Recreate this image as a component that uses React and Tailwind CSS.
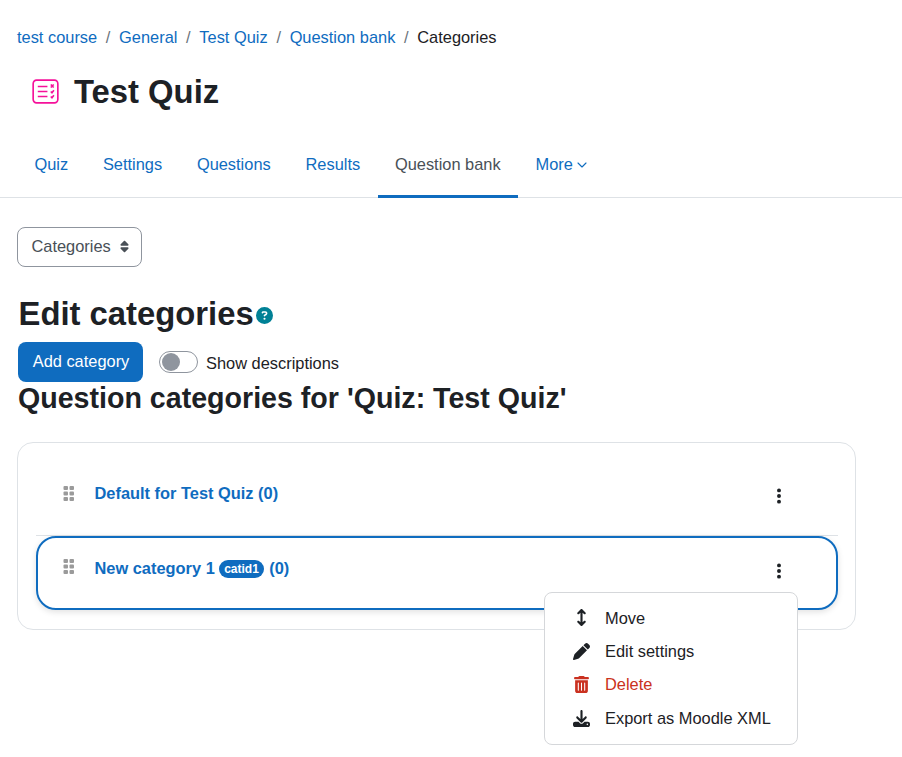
import { FaArrowsUpDown, FaCircleQuestion, FaDownload, FaEllipsisVertical, FaPen, FaSort, FaTrashCan } from "react-icons/fa6";
import { ChevronDown } from "lucide-react";

const crumbs = ["test course", "General", "Test Quiz", "Question bank"];
const tabs = ["Quiz", "Settings", "Questions", "Results"];

function QuizIcon() {
  return (
    <svg width="27" height="25" viewBox="0 0 28 25" fill="none" stroke="#f5119a" strokeWidth="1.7" className="mb-[2px]" preserveAspectRatio="none">
      <rect x="1.2" y="1.2" width="25.6" height="22.6" rx="3.5" />
      <path d="M6 7.5h10M6 12.5h10M6 17.5h10" />
      <path d="M19.5 5.5l3 3M22.5 5.5l-3 3M19.5 12.5l1.2 1.2 2-2.4M19.5 17.5l1.2 1.2 2-2.4" />
    </svg>
  );
}

function Grip() {
  return (
    <svg width="12" height="15" viewBox="0 0 12 15" fill="#9a9a9a" className="ml-px shrink-0">
      <rect x="0.5" y="0" width="4.5" height="4" rx="1" />
      <rect x="6.5" y="0" width="4.5" height="4" rx="1" />
      <rect x="0.5" y="5.5" width="4.5" height="4" rx="1" />
      <rect x="6.5" y="5.5" width="4.5" height="4" rx="1" />
      <rect x="0.5" y="11" width="4.5" height="4" rx="1" />
      <rect x="6.5" y="11" width="4.5" height="4" rx="1" />
    </svg>
  );
}

function MenuItem({ icon, label, danger }) {
  return (
    <div className={`flex h-[33.3px] items-center ${danger ? "text-[#ca3120]" : "text-[#1d2125]"}`}>
      <span className="flex w-[60px] justify-center pl-[13px] text-[17px]">{icon}</span>
      <span>{label}</span>
    </div>
  );
}

export default function App() {
  return (
    <div className="min-h-[757px] bg-white font-['Liberation_Sans',Arial,sans-serif] text-[16.4px] text-[#1d2125]">
      <nav className="flex items-center gap-[8.7px] px-[17px] pt-[28px] leading-[19px]">
        {crumbs.map((c) => (
          <span key={c} className="flex items-center gap-[8.7px]">
            <a className="text-[#0f6cbf]">{c}</a>
            <span className="text-[#6a737b]">/</span>
          </span>
        ))}
        <span>Categories</span>
      </nav>

      <div className="flex items-center pl-[32px] pt-[22px]">
        <QuizIcon />
        <h1 className="ml-[15px] text-[32.8px] font-bold leading-[46px]">Test Quiz</h1>
      </div>

      <div className="mt-[21px] flex h-[62px] border-b border-[#dee2e6] pl-[17px]">
        {tabs.map((t) => (
          <a key={t} className="flex h-[61px] items-center px-[17.4px] pb-[4px] text-[#0f6cbf]">{t}</a>
        ))}
        <a className="flex h-[62px] items-center border-b-[3px] border-[#0f6cbf] px-[17.4px] pb-[3px] text-[#495057]">Question bank</a>
        <a className="flex h-[61px] items-center px-[17.5px] pb-[4px] text-[#0f6cbf]">
          More
          <ChevronDown size={16} strokeWidth={1.7} className="ml-[1px]" />
        </a>
      </div>

      <div className="px-[17px] pt-[29px]">
        <div className="flex h-[40px] w-[125px] items-center gap-[7px] rounded-lg border border-[#8f959e] pb-px pl-[13.5px] text-[#495057]">
          Categories
          <FaSort className="text-[13px]" />
        </div>

        <div className="mt-[26px] flex items-center pl-[1.5px]">
          <h2 className="text-[32.8px] font-bold leading-[42px]">Edit categories</h2>
          <FaCircleQuestion className="ml-[2.5px] mt-[3px] text-[17px] text-[#008196]" />
        </div>

        <div className="ml-px mt-[7px] flex items-center">
          <button className="h-[40px] w-[125px] rounded-lg bg-[#0f6cbf] pb-px pl-px text-white">Add category</button>
          <span className="ml-[16px] flex h-[22px] w-[39px] items-center rounded-full border border-[#8f959e] pl-[2px]">
            <span className="size-[18px] rounded-full bg-[#8f959e]" />
          </span>
          <span className="ml-[8px] mt-[2px]">Show descriptions</span>
        </div>

        <h3 className="-mt-px pb-px pl-px text-[28.6px] font-bold leading-[34px]">Question categories for 'Quiz: Test Quiz'</h3>

        <div className="relative mt-[26px] h-[188px] w-[839px] rounded-2xl border border-[#dee2e6] pl-[18px] pr-[17px]">
          <div className="flex h-[93px] items-start border-b border-[#dee2e6] pl-[26px] pr-[50px] pt-[43px]">
            <Grip />
            <a className="ml-[19.5px] -mt-[2px] font-bold leading-[19px] text-[#0f6cbf]">Default for Test Quiz (0)</a>
            <FaEllipsisVertical className="ml-auto mt-px text-[18px] text-[#1d2125]" />
          </div>
          <div className="flex h-[74px] items-start rounded-[20px] border-[2.5px] border-[#0f6cbf] pl-[24px] pr-[48px] pt-[21px] shadow-[0_2px_6px_rgba(0,0,0,0.12)]">
            <Grip />
            <a className="ml-[19.5px] flex items-center font-bold leading-[19px] text-[#0f6cbf]">
              New category 1
              <span className="ml-[4px] mr-[5px] rounded-full bg-[#0f6cbf] px-[5.4px] text-[12px] leading-[18px] text-white">catid1</span>
              (0)
            </a>
            <FaEllipsisVertical className="ml-auto mt-[3px] text-[18px] text-[#1d2125]" />
          </div>

          <div className="absolute left-[526px] top-[149px] h-[153px] w-[254px] rounded-lg border border-[#d5d7da] bg-white pt-[8.2px]">
            <MenuItem icon={<FaArrowsUpDown />} label="Move" />
            <MenuItem icon={<FaPen />} label="Edit settings" />
            <MenuItem icon={<FaTrashCan />} label="Delete" danger />
            <div className="pt-px">
              <MenuItem icon={<FaDownload />} label="Export as Moodle XML" />
            </div>
          </div>
        </div>
      </div>
    </div>
  );
}
